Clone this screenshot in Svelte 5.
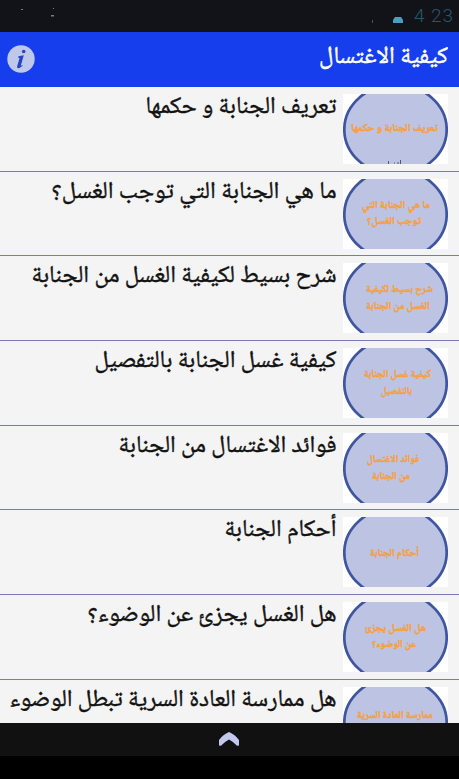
<script>
  const rows = [
    { title: 'تعريف الجنابة و حكمها', width: 191, lines: [{ t: 'تعريف الجنابة و حكمها', x: 438, w: 87, y: 37 }], tail: true },
    { title: 'ما هي الجنابة التي توجب الغسل؟', width: 285, lines: [{ t: 'ما هي الجنابة التي', x: 430, w: 68, y: 29 }, { t: 'توجب الغسل؟', x: 421, w: 54, y: 45 }] },
    { title: 'شرح بسيط لكيفية الغسل من الجنابة', width: 305, lines: [{ t: 'شرح بسيط لكيفية', x: 433, w: 67, y: 29 }, { t: 'الغسل من الجنابة', x: 430, w: 64, y: 46 }] },
    { title: 'كيفية غسل الجنابة بالتفصيل', width: 242, lines: [{ t: 'كيفية غسل الجنابة', x: 431, w: 67, y: 29 }, { t: 'بالتفصيل', x: 412, w: 31, y: 46 }] },
    { title: 'فوائد الاغتسال من الجنابة', width: 218, lines: [{ t: 'فوائد الاغتسال', x: 419, w: 52, y: 29 }, { t: 'من الجنابة', x: 410, w: 38, y: 46 }] },
    { title: 'أحكام الجنابة', width: 112, lines: [{ t: 'أحكام الجنابة', x: 419, w: 49, y: 39 }] },
    { title: 'هل الغسل يجزئ عن الوضوء؟', width: 249, lines: [{ t: 'هل الغسل يجزئ', x: 426, w: 61, y: 29 }, { t: 'عن الوضوء؟', x: 416, w: 44, y: 45 }] },
    { title: 'هل ممارسة العادة السرية تبطل الوضوء', width: 327, lines: [{ t: 'ممارسة العادة السرية', x: 433, w: 76, y: 31 }] }
  ];
</script>

<div class="screen">
  <div class="status">
    <svg width="459" height="32" viewBox="0 0 459 32">
      <g fill="#777b83">
        <rect x="21" y="9" width="2" height="1" /><rect x="53" y="8" width="1" height="1" />
        <rect x="51" y="15" width="3" height="1.5" /><rect x="372" y="20" width="1" height="3" opacity=".6" />
      </g>
      <path d="M393 23v-3l2-3h6l2 3v3z" fill="#4a9fc0" />
      <text class="clock" x="414" y="22" textLength="39">4 23</text>
    </svg>
  </div>
  <header>
    <svg class="info" width="28" height="28" viewBox="0 0 28 28">
      <circle cx="14" cy="14" r="13.7" fill="#c0c8ea" />
      <ellipse cx="16.7" cy="6.5" rx="1.8" ry="1.7" fill="#2443c8" />
      <path d="M11.5 11.3l5.3-1-3.1 10.6 1.6-.8.3.7c-2 1.8-3 2.5-4.2 2.4-1.3-.1-1.5-1.1-1.1-2.5l2.3-7.7-1.4-.3z" fill="#2443c8" />
    </svg>
    <svg class="heading" width="140" height="55" viewBox="0 0 140 55">
      <text x="140" y="31" textLength="129" lengthAdjust="spacingAndGlyphs">كيفية الاغتسال</text>
    </svg>
  </header>
  <main>
    {#each rows as row}
      <article>
        <svg class="title" width="337" height="60" viewBox="0 0 337 60">
          <text x="336.5" y="26" textLength={row.width} lengthAdjust="spacingAndGlyphs">{row.title}</text>
        </svg>
        <svg class="thumb" width="105" height="70" viewBox="0 0 105 70">
          <rect width="105" height="70" fill="#fff" />
          <ellipse cx="52.5" cy="35.5" rx="51.2" ry="45" fill="#bcc3e3" stroke="#3f559f" stroke-width="2.7" />
          {#each row.lines as line}
            <text x={line.x - 343} y={line.y} textLength={line.w} lengthAdjust="spacingAndGlyphs">{line.t}</text>
          {/each}
          {#if row.tail}
            <path d="M45.5 67v3M57.5 66v4M51 69h1M54 69h2" stroke="#555b66" fill="none" />
          {/if}
        </svg>
      </article>
    {/each}
  </main>
  <footer>
    <svg width="20" height="14" viewBox="0 0 20 14">
      <path d="M0 8Q4 2.500 10 0q6 2.500 10 8v5.500l-2 .3Q14 9.500 10 7.500 6 9.500 2 13.800l-2-.3z" fill="#c3c9ec" />
    </svg>
  </footer>
  <div class="base"></div>
</div>

<style>
  .screen { width: 459px; height: 779px; display: flex; flex-direction: column; overflow: hidden; background: #000; }
  svg { display: block; flex: none; }
  text { direction: rtl; font-family: "Noto Naskh Arabic", "Noto Sans Arabic", "DejaVu Sans", sans-serif; }
  .status { height: 32px; flex: none; background: #121319; }
  .clock { direction: ltr; font: 300 19px Roboto, sans-serif; fill: #29566c; }
  header { height: 55px; flex: none; display: flex; justify-content: space-between; padding: 0 11px 0 7px; background: #173eed; }
  .info { margin-top: 13px; }
  .heading text { font-size: 24px; fill: #fff; stroke: #fff; stroke-width: .5px; }
  main { height: 636px; flex: none; overflow: hidden; background: #f4f4f4; }
  article { height: 84.7px; box-sizing: border-box; display: flex; gap: 6px; border-bottom: 1px solid #7779bd; }
  .title text { font-size: 24px; fill: #111; stroke: #111; stroke-width: .45px; }
  .thumb { margin-top: 7px; }
  .thumb text { font-size: 10.5px; font-weight: bold; fill: #f6a040; stroke: #f6a040; stroke-width: .4px; }
  footer { height: 33px; flex: none; display: flex; justify-content: center; padding: 9px 1px 0 0; box-sizing: border-box; background: #111; }
  .base { height: 23px; flex: none; background: #000; }
</style>
